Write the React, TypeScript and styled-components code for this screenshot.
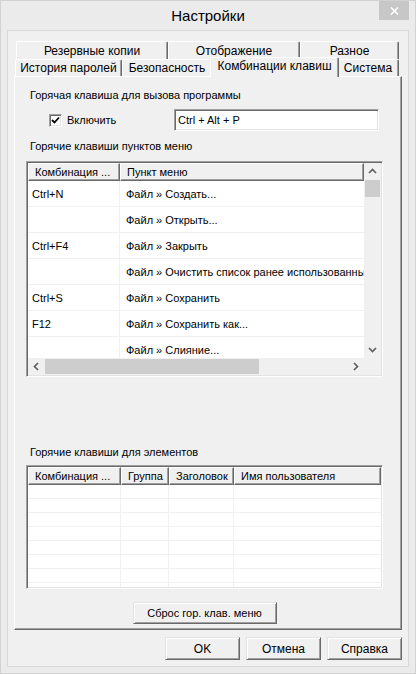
import React from 'react';
import styled, { createGlobalStyle } from 'styled-components';

const GlobalStyle = createGlobalStyle`
  html, body {
    margin: 0;
    padding: 0;
    background: #ffffff;
  }
  body {
    font-family: "Liberation Sans", Arial, sans-serif;
    font-size: 11px;
    color: #000;
  }
  * {
    box-sizing: border-box;
  }
`;

const Window = styled.div`
  width: 416px;
  height: 674px;
  background: #ebebeb;
  border: 1px solid #d2d2d2;
  display: flex;
  flex-direction: column;
`;

const TitleBar = styled.div`
  height: 29px;
  display: grid;
  grid-template-columns: 1fr auto 1fr;
  align-items: center;
`;

const Title = styled.div`
  grid-column: 2;
  font-size: 15px;
  line-height: 18px;
  padding-top: 1px;
  color: #000;
`;

const CloseButton = styled.div`
  grid-column: 3;
  justify-self: end;
  align-self: start;
  width: 30px;
  height: 19px;
  margin-right: 6px;
  background: #c7c7c7;
  display: flex;
  align-items: center;
  justify-content: center;
`;

const Client = styled.div`
  flex: 1;
  margin: 0 6px 6px 6px;
  border: 1px solid #d9d9d9;
  background: #f0f0f0;
  padding: 10px 6px 6px 6px;
  display: flex;
  flex-direction: column;
`;

const TabStrip = styled.div`
  height: 35px;
  display: flex;
  flex-direction: column;
`;

const TabRow = styled.div<{ $h: number; $indent: number }>`
  display: flex;
  height: ${p => p.$h}px;
  margin-left: ${p => p.$indent}px;
`;

const Tab = styled.div<{ $w: number; $active?: boolean }>`
  flex: none;
  width: ${p => (p.$active ? p.$w + 4 : p.$w)}px;
  height: ${p => (p.$active ? 'calc(100% + 3px)' : '100%')};
  margin: ${p => (p.$active ? '-2px -2px 0 -2px' : '0')};
  padding-bottom: ${p => (p.$active ? '4px' : '0')};
  position: relative;
  z-index: ${p => (p.$active ? 2 : 1)};
  display: flex;
  align-items: center;
  justify-content: center;
  background: #f0f0f0;
  border-top: 1px solid #ffffff;
  border-left: 1px solid #ffffff;
  border-right: 1px solid #696969;
  box-shadow: inset -1px 0 #a0a0a0;
  border-radius: 2px 2px 0 0;
  white-space: nowrap;
  font-size: 12px;
`;

const Panel = styled.div`
  height: 554px;
  background: #f0f0f0;
  border-top: 1px solid #ffffff;
  border-left: 1px solid #ffffff;
  border-right: 1px solid #696969;
  border-bottom: 1px solid #696969;
  box-shadow: inset -1px -1px #a0a0a0;
  padding: 0 18px 0 11px;
  display: flex;
  flex-direction: column;
`;

const SectionLabel = styled.div<{ $top: number }>`
  margin-top: ${p => p.$top}px;
  margin-left: 4px;
  line-height: 14px;
  height: 14px;
  white-space: nowrap;
`;

const HotkeyRow = styled.div`
  margin-top: 7px;
  height: 22px;
  display: flex;
  align-items: center;
`;

const CheckBox = styled.div`
  width: 13px;
  height: 13px;
  margin-left: 23px;
  background: #ffffff;
  border-top: 1px solid #a0a0a0;
  border-left: 1px solid #a0a0a0;
  border-right: 1px solid #ffffff;
  border-bottom: 1px solid #ffffff;
  box-shadow: inset 1px 1px #696969, inset -1px -1px #e3e3e3;
  display: flex;
  align-items: center;
  justify-content: center;
`;

const CheckLabel = styled.span`
  margin-left: 5px;
`;

const TextBox = styled.div`
  margin-left: auto;
  margin-right: 4px;
  width: 205px;
  height: 22px;
  background: #ffffff;
  border-top: 1px solid #a0a0a0;
  border-left: 1px solid #a0a0a0;
  border-right: 1px solid #ffffff;
  border-bottom: 1px solid #ffffff;
  box-shadow: inset 1px 1px #696969, inset -1px -1px #e3e3e3;
  padding: 0 3px;
  display: flex;
  align-items: center;
`;

const ListFrame = styled.div<{ $h: number; $top: number; $scroll?: boolean }>`
  margin-top: ${p => p.$top}px;
  height: ${p => p.$h}px;
  background: #ffffff;
  border-top: 1px solid #a0a0a0;
  border-left: 1px solid #a0a0a0;
  border-right: 1px solid #ffffff;
  border-bottom: 1px solid #ffffff;
  box-shadow: inset 1px 1px #696969, inset -1px -1px #e3e3e3;
  padding: 1px;
  display: grid;
  grid-template-columns: ${p => (p.$scroll ? '1fr 17px' : '1fr')};
  grid-template-rows: ${p => (p.$scroll ? '1fr 17px' : '1fr')};
  overflow: hidden;
`;

const TableArea = styled.div`
  overflow: hidden;
  display: flex;
  flex-direction: column;
  min-width: 0;
  min-height: 0;
`;

const HeaderRow = styled.div`
  display: flex;
  height: 18px;
  flex: none;
`;

const HeaderCell = styled.div<{ $w?: number }>`
  ${p => (p.$w ? `width: ${p.$w}px; flex: none;` : 'flex: 1;')}
  height: 18px;
  padding-left: 6px;
  background: #f0f0f0;
  border-top: 1px solid #ffffff;
  border-left: 1px solid #ffffff;
  border-right: 1px solid #696969;
  border-bottom: 1px solid #696969;
  box-shadow: inset -1px -1px #a0a0a0;
  display: flex;
  align-items: center;
  white-space: nowrap;
  overflow: hidden;
`;

const Row = styled.div<{ $h: number }>`
  display: flex;
  height: ${p => p.$h}px;
  flex: none;
  border-bottom: 1px solid #f0f0f0;
`;

const Cell = styled.div<{ $w?: number; $pad: number }>`
  ${p => (p.$w ? `width: ${p.$w}px; flex: none; border-right: 1px solid #f0f0f0;` : 'flex: 1;')}
  padding-left: ${p => p.$pad}px;
  display: flex;
  align-items: center;
  white-space: nowrap;
  overflow: hidden;
`;

const VScroll = styled.div`
  background: #f0f0f0;
  display: flex;
  flex-direction: column;
`;

const HScroll = styled.div`
  background: #f0f0f0;
  display: flex;
`;

const Corner = styled.div`
  background: #f0f0f0;
`;

const ArrowBox = styled.div`
  width: 17px;
  height: 17px;
  flex: none;
  display: flex;
  align-items: center;
  justify-content: center;
`;

const VThumb = styled.div`
  height: 17px;
  margin: 0 1px;
  flex: none;
  background: #cdcdcd;
`;

const HThumb = styled.div<{ $w: number }>`
  width: ${p => p.$w}px;
  margin: 1px 0;
  flex: none;
  background: #cdcdcd;
`;

const Spacer = styled.div`
  flex: 1;
`;

const Button = styled.button<{ $w: number }>`
  width: ${p => p.$w}px;
  height: 23px;
  padding: 0;
  font: inherit;
  font-size: 12px;
  color: #000;
  background: #f0f0f0;
  border-top: 1px solid #e3e3e3;
  border-left: 1px solid #e3e3e3;
  border-right: 1px solid #696969;
  border-bottom: 1px solid #696969;
  box-shadow: inset 1px 1px #ffffff, inset -1px -1px #a0a0a0;
  flex: none;
`;

const ResetButton = styled(Button)`
  margin-top: 13px;
  height: 22px;
  align-self: center;
  font-size: 11px;
`;

const ButtonBar = styled.div`
  margin-top: 7px;
  display: flex;
  justify-content: flex-end;
  gap: 6px;
`;

const Chevron = ({ dir }: { dir: 'up' | 'down' | 'left' | 'right' }) => {
  const rot = { up: 0, right: 90, down: 180, left: 270 }[dir];
  return (
    <svg width="9" height="9" viewBox="0 0 9 9" style={{ transform: `rotate(${rot}deg)` }}>
      <path d="M1 6 L4.5 2.5 L8 6" fill="none" stroke="#606060" strokeWidth="1.7" />
    </svg>
  );
};

const menuRows: [string, string][] = [
  ['Ctrl+N', 'Файл » Создать...'],
  ['', 'Файл » Открыть...'],
  ['Ctrl+F4', 'Файл » Закрыть'],
  ['', 'Файл » Очистить список ранее использованных файлов'],
  ['Ctrl+S', 'Файл » Сохранить'],
  ['F12', 'Файл » Сохранить как...'],
  ['', 'Файл » Слияние...'],
];

const itemCols = [
  { title: 'Комбинация ...', w: 93 },
  { title: 'Группа', w: 48 },
  { title: 'Заголовок', w: 65 },
  { title: 'Имя пользователя', w: 0 },
];

export default function App() {
  return (
    <>
      <GlobalStyle />
      <Window>
        <TitleBar>
          <Title>Настройки</Title>
          <CloseButton>
            <svg width="9" height="8" viewBox="0 0 9 8">
              <path d="M1 0.5 L8 7.5 M8 0.5 L1 7.5" stroke="#ffffff" strokeWidth="1.6" />
            </svg>
          </CloseButton>
        </TitleBar>
        <Client>
          <TabStrip>
            <TabRow $h={18} $indent={2}>
              <Tab $w={152}>Резервные копии</Tab>
              <Tab $w={132}>Отображение</Tab>
              <Tab $w={99}>Разное</Tab>
            </TabRow>
            <TabRow $h={17} $indent={1}>
              <Tab $w={107}>История паролей</Tab>
              <Tab $w={90}>Безопасность</Tab>
              <Tab $w={125} $active>Комбинации клавиш</Tab>
              <Tab $w={62}>Система</Tab>
            </TabRow>
          </TabStrip>
          <Panel>
            <SectionLabel $top={11}>Горячая клавиша для вызова программы</SectionLabel>
            <HotkeyRow>
              <CheckBox>
                <svg width="9" height="9" viewBox="0 0 9 9">
                  <path d="M1 4 L3.5 6.5 L8 1.5" fill="none" stroke="#000" strokeWidth="1.8" />
                </svg>
              </CheckBox>
              <CheckLabel>Включить</CheckLabel>
              <TextBox>Ctrl + Alt + P</TextBox>
            </HotkeyRow>
            <SectionLabel $top={8}>Горячие клавиши пунктов меню</SectionLabel>
            <ListFrame $top={8} $h={216} $scroll>
              <TableArea>
                <HeaderRow>
                  <HeaderCell $w={92}>Комбинация ...</HeaderCell>
                  <HeaderCell>Пункт меню</HeaderCell>
                </HeaderRow>
                {menuRows.map(([key, item], i) => (
                  <Row key={i} $h={26}>
                    <Cell $w={92} $pad={4}>{key}</Cell>
                    <Cell $pad={6}>{item}</Cell>
                  </Row>
                ))}
              </TableArea>
              <VScroll>
                <ArrowBox><Chevron dir="up" /></ArrowBox>
                <VThumb />
                <Spacer />
                <ArrowBox><Chevron dir="down" /></ArrowBox>
              </VScroll>
              <HScroll>
                <ArrowBox><Chevron dir="left" /></ArrowBox>
                <HThumb $w={214} />
                <Spacer />
                <ArrowBox><Chevron dir="right" /></ArrowBox>
              </HScroll>
              <Corner />
            </ListFrame>
            <SectionLabel $top={68}>Горячие клавиши для элементов</SectionLabel>
            <ListFrame $top={6} $h={124}>
              <TableArea>
                <HeaderRow>
                  {itemCols.map(c => (
                    <HeaderCell key={c.title} $w={c.w || undefined}>{c.title}</HeaderCell>
                  ))}
                </HeaderRow>
                {Array.from({ length: 8 }).map((_, i) => (
                  <Row key={i} $h={14}>
                    {itemCols.map(c => (
                      <Cell key={c.title} $w={c.w || undefined} $pad={4} />
                    ))}
                  </Row>
                ))}
              </TableArea>
            </ListFrame>
            <ResetButton $w={144}>Сброс гор. клав. меню</ResetButton>
          </Panel>
          <ButtonBar>
            <Button $w={75}>OK</Button>
            <Button $w={75}>Отмена</Button>
            <Button $w={75}>Справка</Button>
          </ButtonBar>
        </Client>
      </Window>
    </>
  );
}
